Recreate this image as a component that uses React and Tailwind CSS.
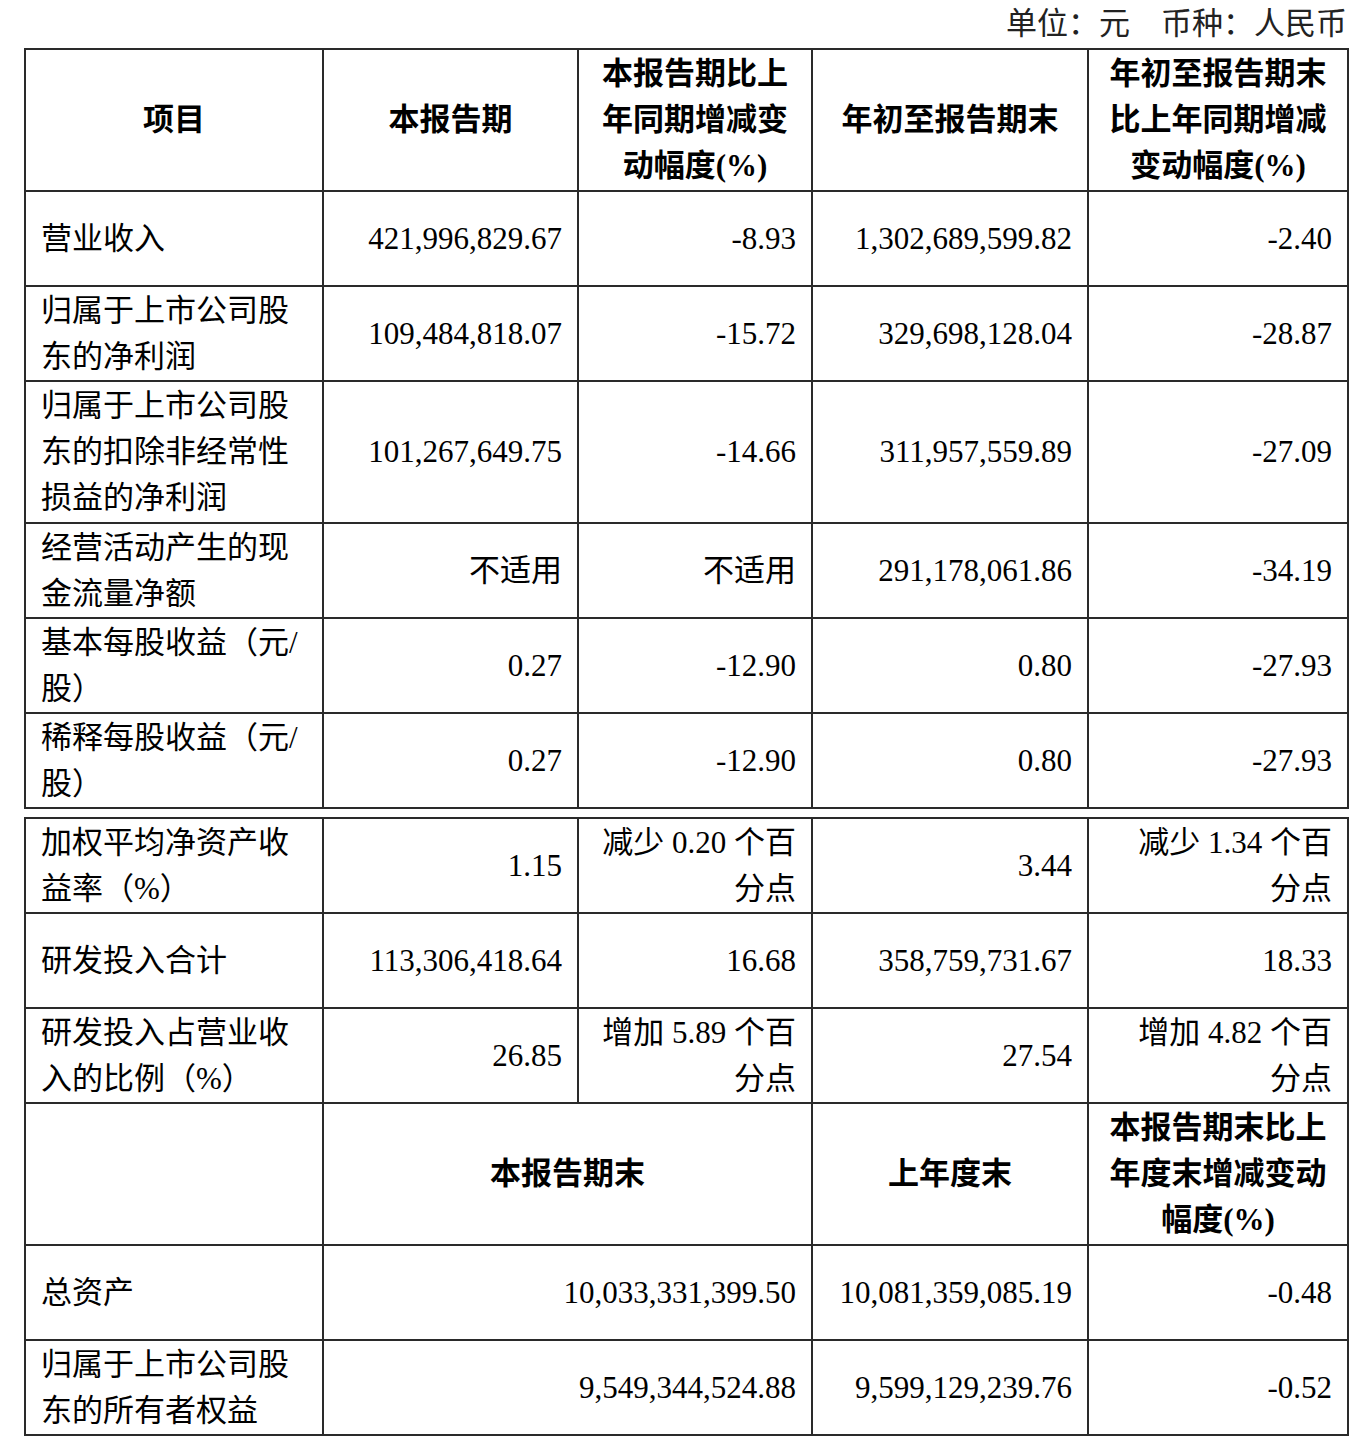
import React from "react";

const font = { fontFamily: '"Liberation Serif", "Noto Sans CJK SC", serif' };

const B = "border-2 border-[#2a2a2a]";

function Td({ children, align = "right", bold = false, colSpan, h }) {
  const a = align === "left" ? "text-left" : align === "center" ? "text-center" : "text-right";
  return (
    <td
      colSpan={colSpan}
      className={`${B} ${a} ${bold ? "font-bold" : ""} px-[15px] align-middle leading-[46px] ${h || ""}`}
    >
      {children}
    </td>
  );
}

function Cols() {
  return (
    <colgroup>
      <col className="w-[298px]" />
      <col className="w-[255px]" />
      <col className="w-[234px]" />
      <col className="w-[276px]" />
      <col className="w-[260px]" />
    </colgroup>
  );
}

const L = (lines) =>
  lines.map((l, i) => (
    <React.Fragment key={i}>
      {i > 0 && <br />}
      {l}
    </React.Fragment>
  ));

export default function App() {
  const rows1 = [
    [["营业收入"], "421,996,829.67", "-8.93", "1,302,689,599.82", "-2.40", "h-[95px]"],
    [["归属于上市公司股", "东的净利润"], "109,484,818.07", "-15.72", "329,698,128.04", "-28.87", "h-[95px]"],
    [["归属于上市公司股", "东的扣除非经常性", "损益的净利润"], "101,267,649.75", "-14.66", "311,957,559.89", "-27.09", "h-[142px]"],
    [["经营活动产生的现", "金流量净额"], "不适用", "不适用", "291,178,061.86", "-34.19", "h-[95px]"],
    [["基本每股收益（元/", "股）"], "0.27", "-12.90", "0.80", "-27.93", "h-[95px]"],
    [["稀释每股收益（元/", "股）"], "0.27", "-12.90", "0.80", "-27.93", "h-[95px]"],
  ];
  const rows2 = [
    [["加权平均净资产收", "益率（%）"], "1.15", ["减少 0.20 个百", "分点"], "3.44", ["减少 1.34 个百", "分点"]],
    [["研发投入合计"], "113,306,418.64", ["16.68"], "358,759,731.67", ["18.33"]],
    [["研发投入占营业收", "入的比例（%）"], "26.85", ["增加 5.89 个百", "分点"], "27.54", ["增加 4.82 个百", "分点"]],
  ];
  return (
    <div className="w-[1358px] h-[1444px] bg-white text-black text-[31px]" style={font}>
      <div className="h-[48px] flex items-center justify-end pr-[11px] text-[#222] text-[31px]">
        单位：元　币种：人民币
      </div>
      <div className="pl-[24px]">
        <table className="table-fixed border-collapse w-[1323px]">
          <Cols />
          <tbody>
            <tr>
              <Td align="center" bold h="h-[142px]">项目</Td>
              <Td align="center" bold>本报告期</Td>
              <Td align="center" bold>{L(["本报告期比上", "年同期增减变", "动幅度(%)"])}</Td>
              <Td align="center" bold>年初至报告期末</Td>
              <Td align="center" bold>{L(["年初至报告期末", "比上年同期增减", "变动幅度(%)"])}</Td>
            </tr>
            {rows1.map((r, i) => (
              <tr key={i}>
                <Td align="left" h={r[5]}>{L(r[0])}</Td>
                <Td>{r[1]}</Td>
                <Td>{r[2]}</Td>
                <Td>{r[3]}</Td>
                <Td>{r[4]}</Td>
              </tr>
            ))}
          </tbody>
        </table>
        <table className="table-fixed border-collapse w-[1323px] mt-[8px]">
          <Cols />
          <tbody>
            {rows2.map((r, i) => (
              <tr key={i}>
                <Td align="left" h="h-[95px]">{L(r[0])}</Td>
                <Td>{r[1]}</Td>
                <Td>{L(r[2])}</Td>
                <Td>{r[3]}</Td>
                <Td>{L(r[4])}</Td>
              </tr>
            ))}
            <tr>
              <Td align="center" h="h-[142px]"></Td>
              <Td align="center" bold colSpan={2}>本报告期末</Td>
              <Td align="center" bold>上年度末</Td>
              <Td align="center" bold>{L(["本报告期末比上", "年度末增减变动", "幅度(%)"])}</Td>
            </tr>
            <tr>
              <Td align="left" h="h-[95px]">总资产</Td>
              <Td colSpan={2}>10,033,331,399.50</Td>
              <Td>10,081,359,085.19</Td>
              <Td>-0.48</Td>
            </tr>
            <tr>
              <Td align="left" h="h-[95px]">{L(["归属于上市公司股", "东的所有者权益"])}</Td>
              <Td colSpan={2}>9,549,344,524.88</Td>
              <Td>9,599,129,239.76</Td>
              <Td>-0.52</Td>
            </tr>
          </tbody>
        </table>
      </div>
    </div>
  );
}
